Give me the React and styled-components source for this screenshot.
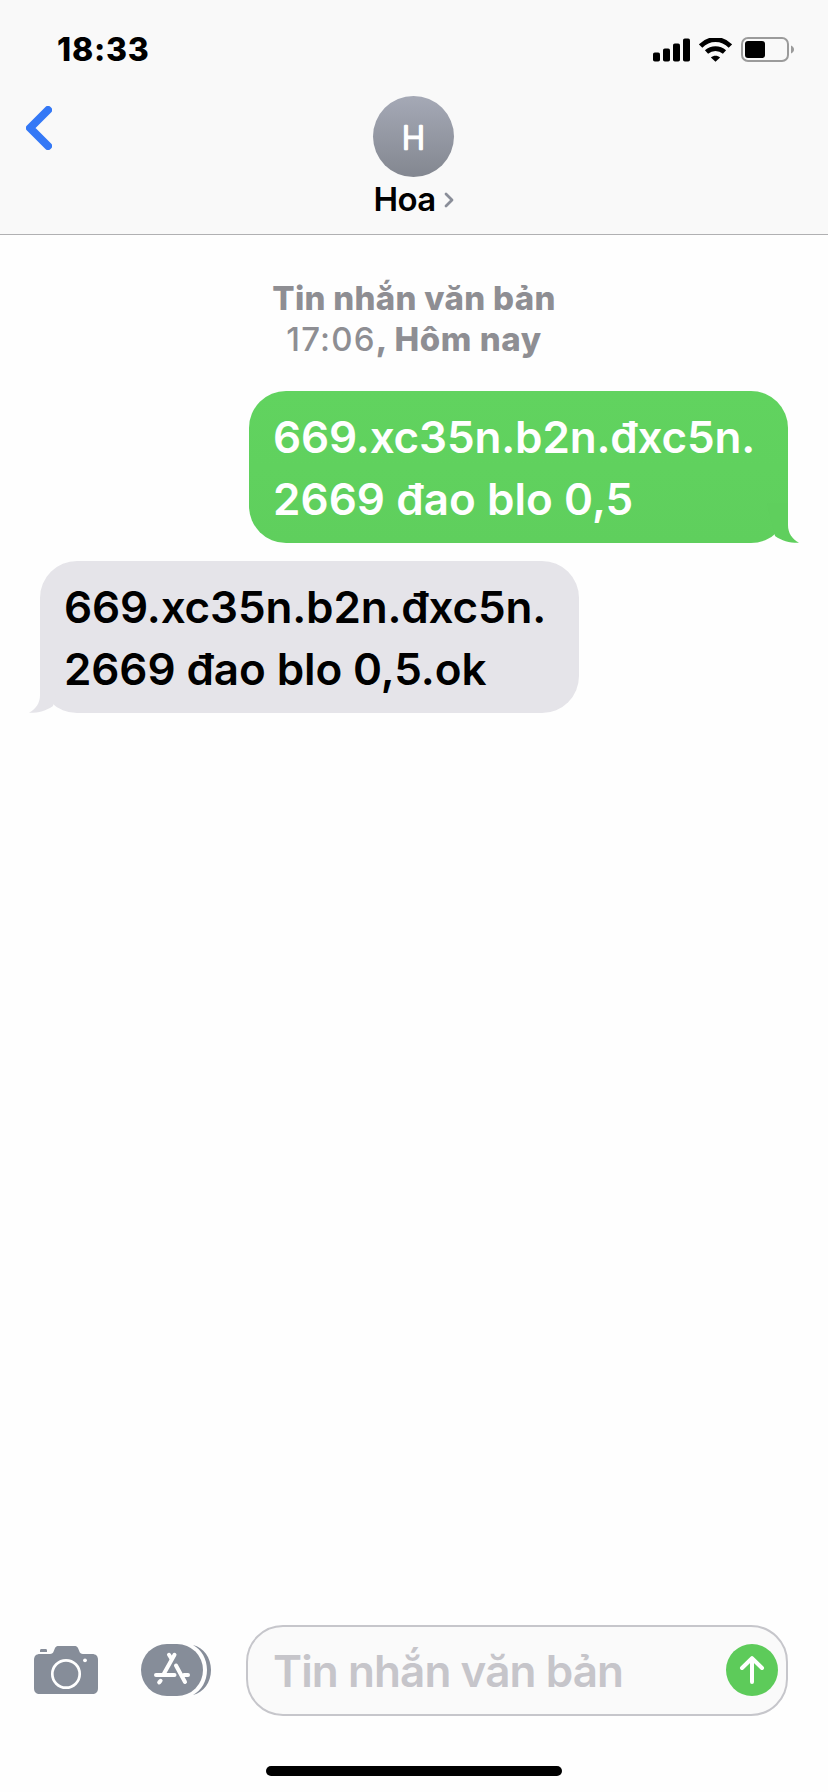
import React from "react";
import styled, { createGlobalStyle } from "styled-components";

const GlobalStyle = createGlobalStyle`
  * {
    box-sizing: border-box;
  }
  body {
    margin: 0;
    background: #fefefe;
    font-family: Inter, "Liberation Sans", sans-serif;
    -webkit-font-smoothing: antialiased;
  }
`;

const Screen = styled.div`
  display: flex;
  flex-direction: column;
  width: 828px;
  height: 1792px;
  overflow: hidden;
  background: #fefefe;
`;

const Header = styled.header`
  display: flex;
  flex-direction: column;
  height: 235px;
  background: #f9f9f9;
  border-bottom: 1px solid #b0b0b2;
`;

const StatusBar = styled.div`
  display: flex;
  align-items: center;
  justify-content: space-between;
  height: 96px;
  padding: 4px 34px 0 57px;
`;

const Clock = styled.span`
  font-size: 32px;
  font-weight: 800;
  line-height: 40px;
  letter-spacing: 0.8px;
`;

const StatusIcons = styled.div`
  display: flex;
  align-items: center;
  gap: 9px;
  margin-bottom: 1px;
  svg {
    display: block;
  }
`;

const NavBar = styled.div`
  display: grid;
  grid-template-columns: 1fr 81px 1fr;
  padding: 0 27px 0 26px;
`;

const BackButton = styled.button`
  display: flex;
  align-self: start;
  justify-self: start;
  margin-top: 10px;
  padding: 0;
  border: 0;
  background: none;
`;

const Contact = styled.div`
  display: flex;
  flex-direction: column;
  align-items: center;
`;

const Avatar = styled.div`
  width: 81px;
  height: 81px;
  border-radius: 50%;
  background: linear-gradient(#a5a9b6, #838790);
  svg {
    display: block;
  }
`;

const NameRow = styled.div`
  display: flex;
  align-items: center;
  gap: 8px;
  margin-top: 2px;
  svg {
    flex-shrink: 0;
    margin-top: 1px;
  }
`;

const Name = styled.span`
  font-size: 33px;
  font-weight: 600;
  line-height: 40px;
  letter-spacing: -0.6px;
`;

const Thread = styled.main`
  display: flex;
  flex: 1;
  flex-direction: column;
  padding: 43px 40px 0;
`;

const Stamp = styled.div`
  margin-bottom: 31px;
  color: #8e8e93;
  font-size: 33px;
  font-weight: 800;
  line-height: 41px;
  text-align: center;
`;

const StampLine = styled.div`
  letter-spacing: ${(p) => p.$spacing};
`;

const StampTime = styled.span`
  font-weight: 500;
  letter-spacing: 1.2px;
`;

const Bubble = styled.div`
  position: relative;
  align-self: ${(p) => (p.$sent ? "flex-end" : "flex-start")};
  width: 539px;
  height: 152px;
  margin-bottom: 18px;
  padding: 15px 0 0 24px;
  border-radius: 37px;
  background: ${(p) => (p.$sent ? "linear-gradient(#61d35f, #5fcf5d)" : "#e5e4e9")};
  color: ${(p) => (p.$sent ? "#fff" : "#000")};
  font-size: 44px;
  font-weight: 600;
  line-height: 62px;
  white-space: nowrap;
`;

const Tail = styled.svg`
  position: absolute;
  bottom: 0;
  left: ${(p) => (p.$sent ? "auto" : "-11px")};
  right: ${(p) => (p.$sent ? "-11px" : "auto")};
  transform: ${(p) => (p.$sent ? "none" : "scaleX(-1)")};
`;

const Line = styled.div`
  letter-spacing: ${(p) => p.$spacing};
`;

const Composer = styled.footer`
  display: flex;
  align-items: center;
  height: 91px;
  padding: 0 40px 0 33px;
  svg {
    display: block;
    margin-bottom: 1px;
  }
`;

const ToolButton = styled.button`
  margin: 0 ${(p) => p.$gap}px 0 0;
  padding: 0;
  border: 0;
  background: none;
`;

const Field = styled.div`
  display: flex;
  flex: 1;
  align-items: center;
  justify-content: space-between;
  height: 91px;
  padding: 0 8px 0 25px;
  border: 2px solid #c6c6cb;
  border-radius: 37px;
  background: #fafafa;
`;

const Placeholder = styled.span`
  color: #c6c5ca;
  font-size: 44px;
  font-weight: 600;
  line-height: 60px;
  letter-spacing: -0.9px;
`;

const HomeArea = styled.div`
  display: flex;
  justify-content: center;
  height: 76px;
  padding-top: 50px;
`;

const HomeBar = styled.div`
  width: 296px;
  height: 10px;
  border-radius: 5px;
  background: #000;
`;

const messages = [
  {
    id: 1,
    sent: true,
    lines: [
      { text: "669.xc35n.b2n.đxc5n.", spacing: "-0.15px" },
      { text: "2669 đao blo 0,5", spacing: "0.05px" },
    ],
  },
  {
    id: 2,
    sent: false,
    lines: [
      { text: "669.xc35n.b2n.đxc5n.", spacing: "-0.15px" },
      { text: "2669 đao blo 0,5.ok", spacing: "-0.1px" },
    ],
  },
];

const Signal = () => (
  <svg width="37" height="24" viewBox="0 0 37 24">
    <rect x="0" y="14.5" width="7" height="9" rx="1.8" />
    <rect x="10" y="10.5" width="7" height="13" rx="1.8" />
    <rect x="20" y="5.5" width="7" height="18" rx="1.8" />
    <rect x="30" y="0.5" width="7" height="23" rx="1.8" />
  </svg>
);

const Wifi = () => (
  <svg width="33" height="24" viewBox="0 0 33 24">
    <g fill="none" stroke="#000" strokeWidth="4.8">
      <path d="M1.6 8C10-.6 23-.6 31.4 8" />
      <path d="M7.5 14c5.2-4.6 12.8-4.6 18 0" />
    </g>
    <path d="M16.5 23.8l-4.6-4.4c2.6-2.3 6.6-2.3 9.2 0z" />
  </svg>
);

const Battery = () => (
  <svg width="53" height="25" viewBox="0 0 53 25">
    <rect x="1" y="1" width="46" height="23" rx="6" fill="none" stroke="#9b9b9b" strokeWidth="2" />
    <rect x="4" y="4" width="20" height="17" rx="3" />
    <path d="M50 8.5c4 1.5 4 6.5 0 8z" fill="#9b9b9b" />
  </svg>
);

const Camera = () => (
  <svg width="66" height="52" viewBox="0 0 66 52">
    <path
      fill="#868d99"
      d="M7 10h10c2 0 3-.8 3.8-3l1-2.5C22.6 2.6 23.8 2 26 2h15c2.2 0 3.4.6 4.2 2.5l1 2.5c.8 2.200 1.800 3 3.800 3h9c4 0 6 2 6 6v28c0 4-2 6-6 6H7c-4 0-6-2-6-6V16c0-4 2-6 6-6z"
    />
    <path fill="#868d99" d="M7 8V6.5C7 5.5 7.5 5 8.5 5h4c1 0 1.5.5 1.5 1.5V8z" />
    <circle cx="33" cy="30" r="13.7" fill="none" stroke="#fff" strokeWidth="2.7" />
    <circle cx="52" cy="16.3" r="1.9" fill="#fff" />
  </svg>
);

const AppStore = () => (
  <svg width="70" height="52" viewBox="0 0 70 52">
    <path d="M52 1c10.5 2.5 18 12.700 18 25s-7.500 22.500-18 25c8.500-4.500 14-14 14-25S60.500 5.500 52 1z" fill="#868d99" />
    <rect width="62" height="52" rx="26" fill="#868d99" />
    <g fill="none" stroke="#fff" strokeWidth="4" strokeLinecap="round">
      <path d="M33.5 10.8L23 29.5" />
      <path d="M19.6 36.8l-1.4 1.6" />
      <path d="M28 10.8l2.5 4" />
      <path d="M35 21.5l9 16.5" />
      <path d="M15 31h18.5M43 31h4" />
    </g>
  </svg>
);

const SendArrow = () => (
  <svg width="52" height="52" viewBox="0 0 52 52">
    <circle cx="26" cy="26" r="26" fill="#5dcb5a" />
    <path
      d="M26 38V14.5M16 24l10-9.8L36 24"
      fill="none"
      stroke="#fff"
      strokeWidth="4"
      strokeLinecap="round"
      strokeLinejoin="round"
    />
  </svg>
);

const App = () => {
  return (
    <>
      <GlobalStyle />
      <Screen>
        <Header>
          <StatusBar>
            <Clock>18:33</Clock>
            <StatusIcons>
              <Signal />
              <Wifi />
              <Battery />
            </StatusIcons>
          </StatusBar>
          <NavBar>
            <BackButton aria-label="Back">
              <svg width="26" height="44" viewBox="0 0 26 44">
                <path
                  d="M22 4L4 22l18 18"
                  fill="none"
                  stroke="#3478f6"
                  strokeWidth="8"
                  strokeLinecap="round"
                  strokeLinejoin="round"
                />
              </svg>
            </BackButton>
            <Contact>
              <Avatar>
                <svg width="81" height="81">
                  <text
                    x="40.5"
                    y="52.6"
                    textAnchor="middle"
                    fill="#fff"
                    stroke="#fff"
                    strokeWidth="2.6"
                    strokeLinejoin="round"
                    fontSize="31"
                    fontWeight="200"
                  >
                    H
                  </text>
                </svg>
              </Avatar>
              <NameRow>
                <Name>Hoa</Name>
                <svg width="10" height="16" viewBox="0 0 10 16">
                  <path
                    d="M2 2l6 6-6 6"
                    fill="none"
                    stroke="#8a8e99"
                    strokeWidth="2.8"
                    strokeLinecap="round"
                    strokeLinejoin="round"
                  />
                </svg>
              </NameRow>
            </Contact>
          </NavBar>
        </Header>
        <Thread>
          <Stamp>
            <StampLine $spacing="0.3px">Tin nhắn văn bản</StampLine>
            <StampLine $spacing="0.6px">
              <StampTime>17:06</StampTime>, Hôm nay
            </StampLine>
          </Stamp>
          {messages.map((m) => (
            <Bubble key={m.id} $sent={m.sent}>
              {m.lines.map((l) => (
                <Line key={l.text} $spacing={l.spacing}>
                  {l.text}
                </Line>
              ))}
              <Tail $sent={m.sent} width="36" height="40" viewBox="0 0 36 40">
                <path
                  d="M4 0h21v22c0 8 4 14 11 17.8-9 .2-17-1.8-24-6.8z"
                  fill={m.sent ? "#5fcf5d" : "#e5e4e9"}
                />
              </Tail>
            </Bubble>
          ))}
        </Thread>
        <Composer>
          <ToolButton $gap={42} aria-label="Camera">
            <Camera />
          </ToolButton>
          <ToolButton $gap={35} aria-label="Apps">
            <AppStore />
          </ToolButton>
          <Field>
            <Placeholder>Tin nhắn văn bản</Placeholder>
            <SendArrow />
          </Field>
        </Composer>
        <HomeArea>
          <HomeBar />
        </HomeArea>
      </Screen>
    </>
  );
};

export default App;
